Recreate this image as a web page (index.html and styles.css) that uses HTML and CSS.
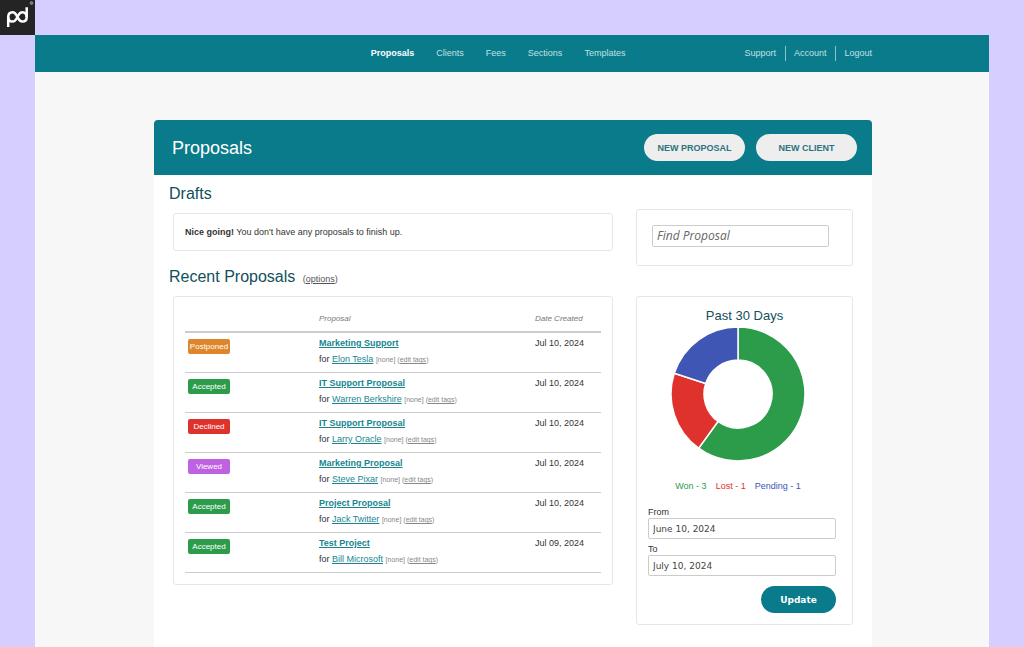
FILE: index.html
```html
<!DOCTYPE html>
<html lang="en">
<head>
<meta charset="utf-8">
<title>Proposals</title>
<link rel="stylesheet" href="styles.css">
</head>
<body>
<svg class="logo" viewBox="0 0 35 35" role="img" aria-label="Logo">
  <rect width="35" height="35" fill="#242424"/>
  <g fill="none" stroke="#fff" stroke-width="2.500">
    <path d="M8.200 27V17C8.200 13.600 10 12.200 12.600 12.200C17.800 12.200 17 21.600 22.300 21.600C25 21.600 26.700 19.800 26.700 17V7.300"/>
    <path d="M8.200 17C8.200 20.200 10 21.600 12.600 21.600C17.800 21.600 17 12.200 22.300 12.200C25 12.200 26.700 14 26.700 17"/>
  </g>
  <circle cx="31.500" cy="3" r="1.500" fill="#777" stroke="#aaa" stroke-width=".5"/>
</svg>
<div class="app">
  <header class="topbar">
    <nav class="menu" aria-label="Main">
      <a class="current" href="#">Proposals</a>
      <a href="#">Clients</a>
      <a href="#">Fees</a>
      <a href="#">Sections</a>
      <a href="#">Templates</a>
    </nav>
    <nav class="account" aria-label="Account">
      <a href="#">Support</a>
      <a href="#">Account</a>
      <a href="#">Logout</a>
    </nav>
  </header>

  <main class="sheet">
    <div class="sheet-head">
      <h1>Proposals</h1>
      <button class="pill" type="button">NEW PROPOSAL</button>
      <button class="pill" type="button">NEW CLIENT</button>
    </div>

    <div class="columns">
      <div class="primary">
        <h2>Drafts</h2>
        <p class="card notice"><strong>Nice going!</strong> You don't have any proposals to finish up.</p>

        <h2 class="recent">Recent Proposals <small>(<a href="#">options</a>)</small></h2>
        <div class="card list">
          <table>
            <thead>
              <tr><th class="col-status"></th><th>Proposal</th><th class="col-date">Date Created</th></tr>
            </thead>
            <tbody>
              <tr>
                <td><span class="badge postponed">Postponed</span></td>
                <td><a class="name" href="#">Marketing Support</a><div class="who">for <a href="#">Elon Tesla</a> <small>[none] (<a href="#">edit tags</a>)</small></div></td>
                <td>Jul 10, 2024</td>
              </tr>
              <tr>
                <td><span class="badge accepted">Accepted</span></td>
                <td><a class="name" href="#">IT Support Proposal</a><div class="who">for <a href="#">Warren Berkshire</a> <small>[none] (<a href="#">edit tags</a>)</small></div></td>
                <td>Jul 10, 2024</td>
              </tr>
              <tr>
                <td><span class="badge declined">Declined</span></td>
                <td><a class="name" href="#">IT Support Proposal</a><div class="who">for <a href="#">Larry Oracle</a> <small>[none] (<a href="#">edit tags</a>)</small></div></td>
                <td>Jul 10, 2024</td>
              </tr>
              <tr>
                <td><span class="badge viewed">Viewed</span></td>
                <td><a class="name" href="#">Marketing Proposal</a><div class="who">for <a href="#">Steve Pixar</a> <small>[none] (<a href="#">edit tags</a>)</small></div></td>
                <td>Jul 10, 2024</td>
              </tr>
              <tr>
                <td><span class="badge accepted">Accepted</span></td>
                <td><a class="name" href="#">Project Proposal</a><div class="who">for <a href="#">Jack Twitter</a> <small>[none] (<a href="#">edit tags</a>)</small></div></td>
                <td>Jul 10, 2024</td>
              </tr>
              <tr>
                <td><span class="badge accepted">Accepted</span></td>
                <td><a class="name" href="#">Test Project</a><div class="who">for <a href="#">Bill Microsoft</a> <small>[none] (<a href="#">edit tags</a>)</small></div></td>
                <td>Jul 09, 2024</td>
              </tr>
            </tbody>
          </table>
        </div>
      </div>

      <aside class="side">
        <form class="card search">
          <input type="search" placeholder="Find Proposal" aria-label="Find Proposal">
        </form>
        <form class="card stats">
          <h3>Past 30 Days</h3>
          <div class="chart">
            <svg viewBox="0 0 134 134" role="img" aria-label="Won 3, Lost 1, Pending 1">
              <g stroke="#fff" stroke-width="1.500">
                <path fill="#2c9c4b" d="M67 0A67 67 0 1 1 27.620 121.200L47.010 94.510A34 34 0 1 0 67 33Z"/>
                <path fill="#df322d" d="M27.620 121.200A67 67 0 0 1 3.280 46.300L34.660 56.490A34 34 0 0 0 47.010 94.510Z"/>
                <path fill="#4056b4" d="M3.280 46.300A67 67 0 0 1 67 0V33A34 34 0 0 0 34.660 56.490Z"/>
              </g>
            </svg>
            <div class="legend">
              <span class="won">Won - 3</span>
              <span class="lost">Lost - 1</span>
              <span class="pending">Pending - 1</span>
            </div>
          </div>
          <label for="from">From</label>
          <input id="from" type="text" value="June 10, 2024">
          <label for="to">To</label>
          <input id="to" type="text" value="July 10, 2024">
          <button class="update" type="submit">Update</button>
        </form>
      </aside>
    </div>
  </main>
</div>
</body>
</html>
```
FILE: styles.css
```css
* {
  box-sizing: border-box;
}

body {
  margin: 0;
  padding: 0 35px;
  min-height: 100vh;
  display: flex;
  flex-direction: column;
  background: #d5ceff;
  color: #333;
  font: 9px/12px "Liberation Sans", Arial, sans-serif;
}

.logo {
  flex: none;
  width: 35px;
  height: 35px;
  margin-left: -35px;
}

.app {
  flex: 1;
  display: flex;
  flex-direction: column;
  background: #f7f7f7;
}

.topbar {
  display: flex;
  justify-content: flex-end;
  align-items: center;
  gap: 119px;
  height: 37px;
  padding: 0 117px 0 119px;
  background: #0a7b8b;
  line-height: 15px;
}

.topbar a {
  color: #c0e0e2;
  text-decoration: none;
}

.topbar .current {
  color: #fff;
  font-weight: bold;
}

.menu {
  display: flex;
  gap: 22px;
}

.account {
  display: flex;
}

.account a + a {
  margin-left: 9px;
  padding-left: 8px;
  border-left: 1px solid #8cc4ca;
}

.sheet {
  flex: 1;
  margin: 48px 117px 0 119px;
  background: #fff;
  border-radius: 4px 4px 0 0;
}

.sheet-head {
  display: flex;
  align-items: center;
  gap: 11px;
  height: 55px;
  padding: 0 15px 0 18px;
  background: #0a7b8b;
  border-radius: 4px 4px 0 0;
}

h1 {
  flex: 1;
  margin: 0;
  color: #fff;
  font-size: 18px;
  font-weight: normal;
  line-height: 24px;
}

.pill {
  width: 101px;
  height: 27px;
  padding: 0;
  border: 0;
  border-radius: 14px;
  background: #eee;
  color: #2c737d;
  font: bold 9px "Liberation Sans", Arial, sans-serif;
}

.columns {
  display: grid;
  grid-template-columns: 1fr 217px;
  gap: 23px;
  padding: 0 19px 22px;
}

.card {
  margin: 0;
  border: 1px solid #e6e6e6;
  border-radius: 3px;
}

h2 {
  margin: 8px 0 8px -4px;
  color: #12505b;
  font-size: 16px;
  font-weight: normal;
  line-height: 22px;
}

h2.recent {
  margin-top: 15px;
}

h2 small {
  margin-left: 3px;
  color: #555;
  font-size: 9px;
  line-height: 12px;
}

small a {
  color: inherit;
}

.notice {
  padding: 12px 11px;
}

.list {
  padding: 11px;
}

table {
  width: 100%;
  border-collapse: separate;
  border-spacing: 0;
  table-layout: fixed;
}

th {
  height: 25px;
  padding: 0 0 1px;
  border-bottom: 2px solid #ccc;
  color: #777;
  font-size: 8px;
  font-weight: normal;
  font-style: italic;
  text-align: left;
}

.col-status {
  width: 134px;
}

.col-date {
  width: 66px;
}

td {
  height: 40px;
  padding: 4px 0 0;
  border-bottom: 1px solid #ccc;
  vertical-align: top;
}

td a {
  color: #17858f;
}

.name {
  font-weight: bold;
}

.who {
  margin-top: 4px;
}

.who small {
  color: #888;
  font-size: 7px;
  line-height: 9px;
}

.who small a {
  color: inherit;
}

.badge {
  display: block;
  width: 42px;
  margin: 2px 0 0 3px;
  border-radius: 2px;
  color: #fff;
  font-size: 8px;
  line-height: 15px;
  text-align: center;
}

.postponed {
  background: #de862b;
}

.accepted {
  background: #2c9c4b;
}

.declined {
  background: #df322d;
}

.viewed {
  background: #bf62e1;
}

.side {
  display: flex;
  flex-direction: column;
  align-items: stretch;
  gap: 30px;
  padding-top: 34px;
}

input {
  display: block;
  width: 100%;
  height: 21px;
  margin: 0;
  padding: 0 4px;
  border: 1px solid #ccc;
  border-radius: 2px;
  background: #fff;
  color: #444;
  font: 9px "DejaVu Sans", sans-serif;
}

.search {
  padding: 15px 23px 18px 15px;
}

.search input {
  height: 22px;
  padding-bottom: 2px;
  font: italic 12px "Open Sans", sans-serif;
}

.search input::placeholder {
  color: #666;
}

.stats {
  padding: 10px 16px 11px 11px;
}

h3 {
  margin: 0 -5px 0 0;
  color: #12505b;
  font-size: 13px;
  font-weight: normal;
  line-height: 17px;
  text-align: center;
}

.chart {
  display: flex;
  flex-direction: column;
  align-items: center;
  gap: 19px;
  margin: 3px 8px 14px 0;
}

.chart svg {
  width: 134px;
  height: 134px;
}

.legend {
  display: flex;
  gap: 9px;
}

.won {
  color: #2c9c4b;
}

.lost {
  color: #df322d;
}

.pending {
  color: #4056b4;
}

label {
  display: block;
  color: #333;
}

label[for="to"] {
  margin-top: 4px;
}

.update {
  display: block;
  width: 75px;
  height: 27px;
  margin: 10px 0 0 auto;
  padding: 0;
  border: 0;
  border-radius: 14px;
  background: #0a7b8b;
  color: #fff;
  font: bold 9px "DejaVu Sans", sans-serif;
}
```
